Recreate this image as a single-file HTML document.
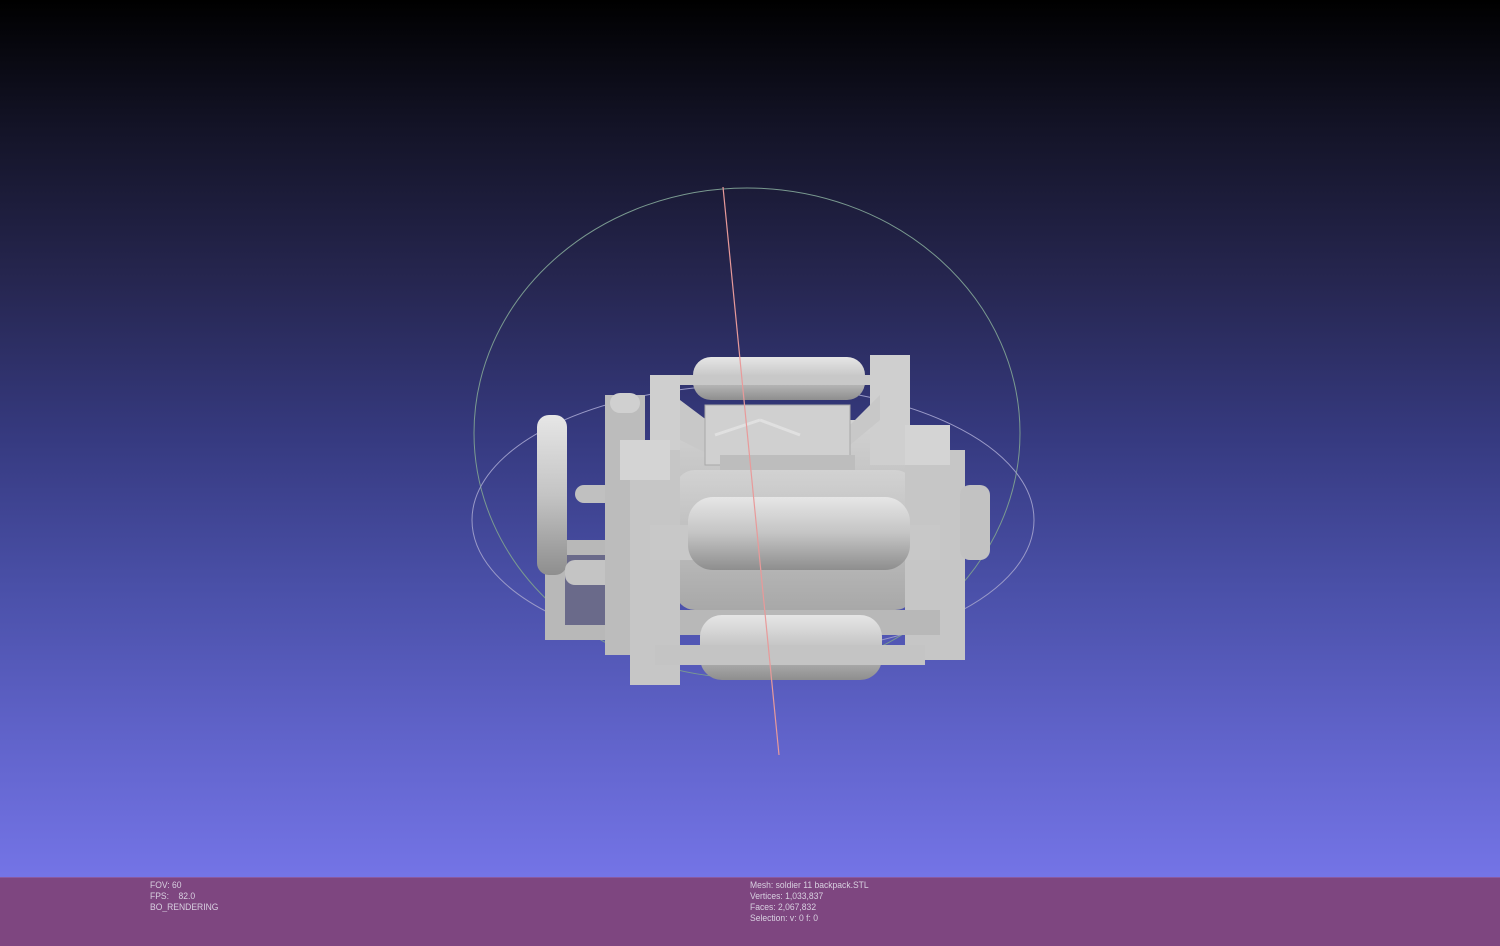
<!DOCTYPE html>
<html><head><meta charset="utf-8"><style>
html,body{margin:0;padding:0;width:1500px;height:945px;overflow:hidden;background:#000}
#v{position:absolute;left:0;top:0;width:1500px;height:877px;background:linear-gradient(#000 0%,#141428 15%,#262650 32%,#363a80 50%,#4a50a8 67%,#5f62c8 83%,#7474e6 100%)}
#bar{position:absolute;left:0;top:877px;width:1500px;height:68px;background:#7e4680;border-top:1px solid #8a5aa0}
.t{position:absolute;font:9px/11px "Liberation Sans",sans-serif;color:#d8d0e0;white-space:pre;transform:scaleX(.95);transform-origin:0 0}
svg{position:absolute;left:0;top:0}
</style></head><body>
<div id="v"></div>
<svg width="1500" height="877" viewBox="0 0 1500 877">
<defs>
<linearGradient id="cy" x1="0" y1="0" x2="0" y2="1"><stop offset="0" stop-color="#e6e6e6"/><stop offset=".5" stop-color="#c4c4c4"/><stop offset="1" stop-color="#8e8e8e"/></linearGradient>
<linearGradient id="bd" x1="0" y1="0" x2="0" y2="1"><stop offset="0" stop-color="#d2d2d2"/><stop offset="1" stop-color="#a8a8a8"/></linearGradient>
</defs>
<ellipse cx="747" cy="433" rx="273" ry="245" fill="none" stroke="#7a9a90" stroke-width="1"/>
<ellipse cx="753" cy="520" rx="281" ry="135" fill="none" stroke="#9a9ac8" stroke-width="1"/>
<!-- left frame -->
<rect x="545" y="540" width="90" height="100" fill="#b8b8b8"/>
<rect x="565" y="555" width="55" height="70" fill="#6a6a8a"/>
<rect x="537" y="415" width="30" height="160" rx="12" fill="url(#cy)"/>
<rect x="565" y="560" width="50" height="25" rx="10" fill="#c4c4c4"/>
<rect x="575" y="485" width="60" height="18" rx="9" fill="#c0c0c0"/>
<rect x="605" y="395" width="40" height="260" fill="#bcbcbc"/>
<rect x="610" y="393" width="30" height="20" rx="10" fill="#d0d0d0"/>
<!-- back body -->
<rect x="680" y="420" width="230" height="180" fill="url(#bd)"/>
<rect x="693" y="357" width="172" height="43" rx="18" fill="url(#cy)"/>
<rect x="650" y="375" width="30" height="90" fill="#cfcfcf"/>
<rect x="870" y="355" width="40" height="110" fill="#cfcfcf"/>
<rect x="680" y="375" width="190" height="10" fill="#c8c8c8"/>
<polygon points="680,400 720,430 845,430 880,395 880,420 850,445 850,460 720,460 680,440" fill="#c8c8c8"/>
<rect x="705" y="405" width="145" height="60" fill="#d0d0d0" stroke="#a8a8a8"/>
<line x1="715" y1="435" x2="760" y2="420" stroke="#e0e0e0" stroke-width="3"/>
<line x1="760" y1="420" x2="800" y2="435" stroke="#e0e0e0" stroke-width="3"/>
<rect x="720" y="455" width="135" height="18" fill="#bdbdbd"/>
<rect x="675" y="470" width="240" height="140" rx="20" fill="url(#bd)"/>
<!-- front frames -->
<rect x="630" y="450" width="50" height="235" fill="#c6c6c6"/>
<rect x="905" y="450" width="60" height="210" fill="#c6c6c6"/>
<rect x="960" y="485" width="30" height="75" rx="10" fill="#c2c2c2"/>
<rect x="620" y="440" width="50" height="40" fill="#d4d4d4"/>
<rect x="905" y="425" width="45" height="40" fill="#d4d4d4"/>
<rect x="650" y="525" width="290" height="35" fill="#c8c8c8"/>
<rect x="688" y="497" width="222" height="73" rx="25" fill="url(#cy)"/>
<rect x="680" y="610" width="260" height="25" fill="#b8b8b8"/>
<rect x="700" y="615" width="182" height="65" rx="22" fill="url(#cy)"/>
<rect x="655" y="645" width="270" height="20" fill="#c4c4c4"/>
<line x1="723" y1="187" x2="779" y2="755" stroke="#e89a9a" stroke-width="1.2"/>
</svg>
<div id="bar"></div>
<div class="t" style="left:150px;top:880px">FOV: 60
FPS:    82.0
BO_RENDERING</div>
<div class="t" style="left:750px;top:880px">Mesh: soldier 11 backpack.STL
Vertices: 1,033,837
Faces: 2,067,832
Selection: v: 0 f: 0</div>
</body></html>
